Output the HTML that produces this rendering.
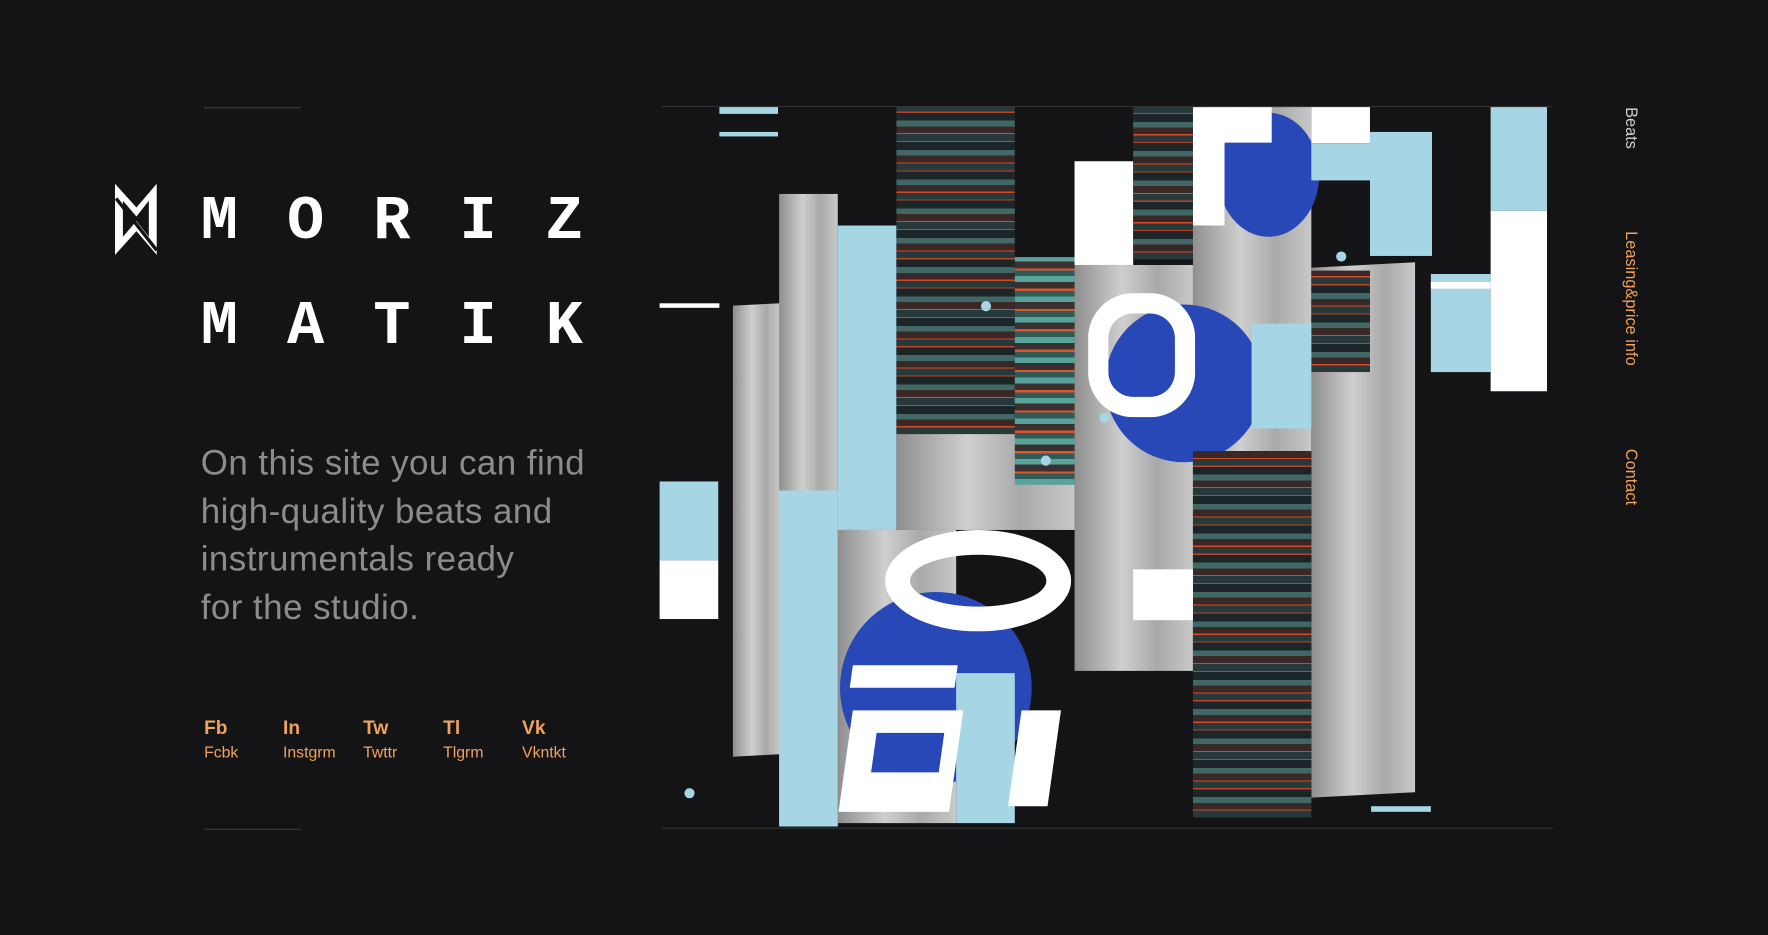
<!DOCTYPE html>
<html><head><meta charset="utf-8"><style>
html,body{margin:0;padding:0;background:#141316;overflow:hidden}
body{width:1768px;height:935px;position:relative}
#s{position:absolute;left:0;top:0;width:1568px;height:829px;transform:scale(1.12755);transform-origin:0 0}
.a{position:absolute}
.lb{background:#a6d6e4}.w{background:#fff}
.g{background:linear-gradient(90deg,#8f8f8f,#cfcfcf 40%,#a9a9a9 70%,#c8c8c8)}
.n{background:repeating-linear-gradient(0deg,#27393b 0 6px,#d24a28 6px 7px,#3a2826 7px 13px,#416866 13px 18px,#1c2628 18px 25px,#b8442a 25px 26px)}
.t{background:repeating-linear-gradient(0deg,#5aa39a 0 5px,#2e5a58 5px 10px,#d9572f 10px 12px,#3a3030 12px 18px)}
.mono{font-family:"Liberation Mono",monospace;font-weight:bold;color:#fff;font-size:55px;letter-spacing:43.5px}
.soc{font-family:"Liberation Sans",sans-serif;color:#efa35c}
.soc b{display:block;font-size:17px}
.soc span{display:block;font-size:14px;margin-top:3px}
.v{writing-mode:vertical-rl;font-family:"Liberation Sans",sans-serif;font-size:14.5px}
.dot{position:absolute;width:9px;height:9px;border-radius:50%;background:#a6d6e4}
</style></head><body><div id="s">
<div class="a" style="left:181px;top:95px;width:86px;height:1px;background:#3a3a3d"></div>
<div class="a" style="left:181px;top:735px;width:86px;height:1px;background:#3a3a3d"></div>
<svg class="a" style="left:101px;top:162px" width="40" height="66" viewBox="0 0 40 66"><path d="M1 1 L20 22 L38 1 L38 64 L20 43 L1 64 Z M8 16 L8 48 L20 34 L31 48 L31 16 L20 30 Z" fill="#fff" fill-rule="evenodd"/><path d="M2 14 L38 60" stroke="#141316" stroke-width="3"/></svg>
<div class="a mono" style="left:178px;top:164px;line-height:65px">MORIZ</div>
<div class="a mono" style="left:178px;top:257px;line-height:65px">MATIK</div>
<div class="a" style="left:178px;top:390px;font-family:'Liberation Sans',sans-serif;font-size:31px;letter-spacing:0.4px;line-height:42.5px;color:#8c8c8e">On this site you can find<br>high-quality beats and<br>instrumentals ready<br>for the studio.</div>
<div class="a soc" style="left:181px;top:636px"><b>Fb</b><span>Fcbk</span></div>
<div class="a soc" style="left:251px;top:636px"><b>In</b><span>Instgrm</span></div>
<div class="a soc" style="left:322px;top:636px"><b>Tw</b><span>Twttr</span></div>
<div class="a soc" style="left:393px;top:636px"><b>Tl</b><span>Tlgrm</span></div>
<div class="a soc" style="left:463px;top:636px"><b>Vk</b><span>Vkntkt</span></div>

<div class="a" style="left:587px;top:94px;width:790px;height:1px;background:#333"></div>
<div class="a" style="left:587px;top:734px;width:790px;height:1px;background:#333"></div>
<div class="a lb" style="left:638px;top:95px;width:52px;height:6px"></div>
<div class="a lb" style="left:638px;top:117px;width:52px;height:4px"></div>
<div class="a w" style="left:585px;top:269px;width:53px;height:4px"></div>
<div class="a lb" style="left:585px;top:427px;width:52px;height:70px"></div>
<div class="a w" style="left:585px;top:497px;width:52px;height:52px"></div>
<div class="a g" style="left:650px;top:270px;width:42px;height:400px;transform:skewY(-3deg)"></div>
<div class="a g" style="left:691px;top:172px;width:52px;height:560px"></div>
<div class="a lb" style="left:743px;top:200px;width:52px;height:270px"></div>
<div class="a lb" style="left:691px;top:435px;width:52px;height:298px"></div>
<div class="a g" style="left:743px;top:470px;width:105px;height:260px"></div>
<div class="a" style="left:745px;top:525px;width:170px;height:170px;border-radius:50%;background:#2948b8"></div>
<div class="a n" style="left:795px;top:95px;width:105px;height:290px"></div>
<div class="a g" style="left:795px;top:385px;width:158px;height:85px"></div>
<div class="a t" style="left:900px;top:228px;width:53px;height:202px"></div>
<div class="a g" style="left:953px;top:235px;width:105px;height:360px"></div>
<div class="a w" style="left:953px;top:143px;width:52px;height:92px"></div>
<div class="a n" style="left:1005px;top:95px;width:53px;height:135px"></div>
<div class="a g" style="left:1058px;top:95px;width:105px;height:305px"></div>
<div class="a" style="left:980px;top:270px;width:140px;height:140px;border-radius:50%;background:#2948b8"></div>
<div class="a" style="left:1080px;top:100px;width:90px;height:110px;border-radius:50%;background:#2948b8"></div>
<div class="a w" style="left:1058px;top:95px;width:70px;height:105px;clip-path:polygon(0 0,100% 0,100% 30%,40% 30%,40% 100%,0 100%)"></div>
<div class="a" style="left:965px;top:260px;width:95px;height:110px;border-radius:40px;box-shadow:inset 0 0 0 18px #fff"></div>
<div class="a w" style="left:1163px;top:95px;width:52px;height:32px"></div>
<div class="a lb" style="left:1163px;top:127px;width:107px;height:33px"></div>
<div class="a lb" style="left:1215px;top:117px;width:55px;height:110px"></div>
<div class="a lb" style="left:1322px;top:95px;width:50px;height:92px"></div>
<div class="a w" style="left:1322px;top:187px;width:50px;height:160px"></div>
<div class="a lb" style="left:1269px;top:243px;width:53px;height:87px"></div>
<div class="a w" style="left:1269px;top:250px;width:53px;height:6px"></div>
<div class="a g" style="left:1163px;top:235px;width:92px;height:470px;transform:skewY(-3deg)"></div>
<div class="a n" style="left:1163px;top:240px;width:52px;height:90px"></div>
<div class="a lb" style="left:1110px;top:287px;width:53px;height:93px"></div>
<div class="a n" style="left:1058px;top:400px;width:105px;height:325px"></div>
<div class="a w" style="left:1005px;top:505px;width:53px;height:45px"></div>
<div class="a lb" style="left:848px;top:597px;width:52px;height:133px"></div>
<div class="a" style="left:785px;top:470px;width:165px;height:90px;border-radius:50%;box-shadow:inset 0 0 0 22px #fff"></div>
<div class="a w" style="left:755px;top:590px;width:93px;height:20px;transform:skewX(-8deg)"></div>
<div class="a w" style="left:750px;top:630px;width:98px;height:90px;transform:skewX(-8deg)"></div>
<div class="a" style="left:775px;top:650px;width:60px;height:35px;background:#2948b8;transform:skewX(-8deg)"></div>
<div class="a w" style="left:900px;top:630px;width:35px;height:85px;transform:skewX(-8deg)"></div>
<div class="a lb" style="left:1216px;top:715px;width:53px;height:5px"></div>
<div class="dot" style="left:607px;top:699px"></div>
<div class="dot" style="left:1185px;top:223px"></div>
<div class="dot" style="left:870px;top:267px"></div>
<div class="dot" style="left:923px;top:404px"></div>
<div class="dot" style="left:975px;top:366px"></div>

<div class="a v" style="left:1438px;top:95px;color:#d0d0d0">Beats</div>
<div class="a v" style="left:1438px;top:205px;color:#efa35c">Leasing&amp;price info</div>
<div class="a v" style="left:1438px;top:398px;color:#efa35c">Contact</div>
</div></body></html>
